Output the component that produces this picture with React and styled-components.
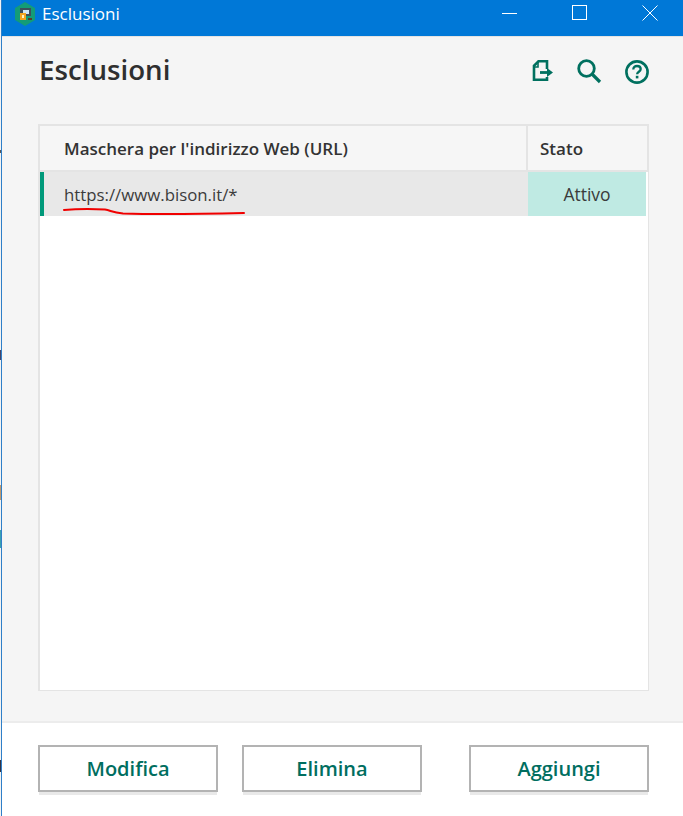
import React from "react";
import styled, { createGlobalStyle } from "styled-components";

const Global = createGlobalStyle`
  html, body { margin: 0; padding: 0; background: #fff; }
  *, *::before, *::after { box-sizing: border-box; }
  body { font-family: "Open Sans", "Noto Sans", "Liberation Sans", sans-serif; overflow: hidden; }
`;

const Desktop = styled.div`
  display: flex;
  width: 683px;
  height: 816px;
  overflow: hidden;
`;
const DesktopSliver = styled.div`
  width: 1px;
  flex: none;
  background: linear-gradient(#f3f3f3 0 150px, #555 150px 153px, #f3f3f3 153px 350px, #446 350px 360px, #f3f3f3 360px 485px, #c09a70 485px 500px, #f3f3f3 500px 530px, #3aa0b0 530px 548px, #f3f3f3 548px 760px, #334 760px 772px, #f3f3f3 772px);
`;
const Window = styled.div`
  flex: 1;
  min-width: 0;
  display: flex;
  flex-direction: column;
  border-left: 1px solid #2f7fc8;
  background: #fff;
`;
const TitleBar = styled.div`
  height: 36px;
  flex: none;
  display: flex;
  align-items: center;
  gap: 4px;
  background: #0078d7;
  color: #fff;
  padding: 0 0 8px 12px;
`;
const TitleText = styled.span`
  font-size: 17px;
  line-height: 24px;
  margin-left: 2px;
  flex: 1;
`;
const WinButton = styled.div`
  width: 66px;
  height: 26px;
  margin-bottom: 2px;
  display: flex;
  align-items: center;
  justify-content: center;
`;
const Body = styled.div`
  flex: 1;
  min-height: 0;
  display: flex;
  flex-direction: column;
  background: #f5f5f5;
  border-top: 1px solid #e3e3e3;
  border-bottom: 2px solid #ececec;
  padding: 0 34px 30px 36px;
`;
const Header = styled.div`
  height: 87px;
  flex: none;
  display: flex;
  align-items: flex-start;
  justify-content: space-between;
`;
const Title = styled.h1`
  margin: 13px 0 0 1px;
  font-size: 27.7px;
  line-height: 38px;
  font-weight: 600;
  color: #2f2f2f;
`;
const Tools = styled.div`
  display: flex;
  gap: 22px;
  margin: 21px -1px 0 0;
`;
const ToolIcon = styled.svg`
  width: 26px;
  height: 26px;
  display: block;
`;
const Table = styled.div`
  flex: 1;
  min-height: 0;
  background: #fff;
  border-style: solid;
  border-color: #e4e4e4;
  border-width: 2px 1px 1px 2px;
  position: relative;
  display: flex;
  flex-direction: column;
`;
const HeadRow = styled.div`
  height: 46px;
  flex: none;
  display: flex;
  background: #f6f6f6;
  border-bottom: 2px solid #e4e4e4;
  border-right: 1px solid #e4e4e4;
`;
const HeadCell = styled.div`
  width: ${(p) => p.$w}px;
  flex: ${(p) => (p.$w ? "none" : 1)};
  display: flex;
  align-items: center;
  padding-left: ${(p) => p.$pad}px;
  font-size: 17px;
  font-weight: 600;
  color: #333;
  border-left: ${(p) => (p.$divider ? "2px solid #e4e4e4" : "none")};
`;
const Row = styled.div`
  height: 44px;
  flex: none;
  display: flex;
  margin-right: 2px;
  background: #e8e8e8;
  border-left: 4px solid #00997a;
`;
const UrlCell = styled.div`
  flex: 1;
  display: flex;
  align-items: center;
  padding-left: 20px;
  font-size: 16.8px;
  color: #3b3b3b;
`;
const StateCell = styled.div`
  width: 118px;
  flex: none;
  display: flex;
  align-items: center;
  justify-content: center;
  background: #bfeae3;
  font-size: 17.5px;
  color: #3b3b3b;
`;
const Scribble = styled.svg`
  position: absolute;
  left: 20px;
  top: 79px;
  width: 190px;
  height: 14px;
  pointer-events: none;
`;
const Footer = styled.div`
  height: 93px;
  flex: none;
  display: flex;
  align-items: flex-start;
  padding: 22px 34px 0 36px;
  background: #fff;
`;
const Button = styled.button`
  width: 180px;
  height: 47px;
  margin-right: ${(p) => p.$gap}px;
  background: #fff;
  border: 2px solid #b3b3b3;
  box-shadow: 0 4px 0 -1px #e9e9e9;
  color: #006e5f;
  font-family: inherit;
  font-size: 20px;
  font-weight: 600;
  padding: 0;
`;

const AppLogo = () => (
  <svg width="22" height="24" viewBox="0 0 22 24">
    <path d="M11 0 21 6v12l-10 6L1 18V6z" fill="#139c77" />
    <rect x="6" y="6" width="11" height="8" fill="#3d4f5c" />
    <rect x="9" y="8" width="6" height="4" fill="#cfe6f5" />
    <rect x="6" y="11" width="6" height="7" fill="#f4a521" />
    <rect x="8" y="13" width="2" height="3" fill="#fff2c4" />
    <rect x="14" y="16" width="4" height="2" fill="#5a3b2a" />
  </svg>
);

const Minimize = () => (
  <svg width="16" height="16" viewBox="0 0 16 16"><path d="M0 8.5h15" stroke="#fff" fill="none" /></svg>
);
const Maximize = () => (
  <svg width="16" height="16" viewBox="0 0 16 16"><rect x="0.5" y="0.5" width="14" height="14" stroke="#fff" fill="none" /></svg>
);
const Close = () => (
  <svg width="16" height="16" viewBox="0 0 16 16"><path d="M0.5 0.5l15 15M15.5 0.5l-15 15" stroke="#fff" fill="none" /></svg>
);

const ExportIcon = () => (
  <ToolIcon viewBox="0 0 26 26">
    <path d="M19 11V3.3H10.5L6 7.8V21.7H19V19" fill="none" stroke="#00705f" strokeWidth="2.6" />
    <path d="M10 4v5H6" fill="none" stroke="#00705f" strokeWidth="1.6" />
    <path d="M12 14.5h8" stroke="#00705f" strokeWidth="2.8" fill="none" />
    <path d="M19 10 25 14.5 19 19z" fill="#00705f" />
  </ToolIcon>
);
const SearchIcon = () => (
  <ToolIcon viewBox="0 0 26 26">
    <circle cx="10.5" cy="10.5" r="7.8" fill="none" stroke="#00705f" strokeWidth="2.8" />
    <path d="M16 16l8 8" stroke="#00705f" strokeWidth="3.2" fill="none" />
  </ToolIcon>
);
const HelpIcon = () => (
  <ToolIcon viewBox="0 0 26 26">
    <circle cx="13" cy="14" r="10.6" fill="none" stroke="#00705f" strokeWidth="2.6" />
    <path d="M9.3 11.4c0-2.2 1.6-3.4 3.7-3.4s3.7 1.2 3.7 3.1c0 2.7-3.6 2.6-3.6 5.2" fill="none" stroke="#00705f" strokeWidth="2.3" />
    <rect x="11.8" y="17.8" width="2.6" height="2.6" fill="#00705f" />
  </ToolIcon>
);

export default function App() {
  return (
    <>
      <Global />
      <Desktop>
        <DesktopSliver />
        <Window>
          <TitleBar>
            <AppLogo />
            <TitleText>Esclusioni</TitleText>
            <WinButton><Minimize /></WinButton>
            <WinButton><Maximize /></WinButton>
            <WinButton><Close /></WinButton>
          </TitleBar>
          <Body>
            <Header>
              <Title>Esclusioni</Title>
              <Tools>
                <ExportIcon />
                <SearchIcon />
                <HelpIcon />
              </Tools>
            </Header>
            <Table>
              <HeadRow>
                <HeadCell $pad={24}>Maschera per l'indirizzo Web (URL)</HeadCell>
                <HeadCell $w={121} $pad={12} $divider>Stato</HeadCell>
              </HeadRow>
              <Row>
                <UrlCell>https://www.bison.it/*</UrlCell>
                <StateCell>Attivo</StateCell>
              </Row>
              <Scribble viewBox="0 0 190 14">
                <path d="M4 5c12 -1 30 -1 41 -0.5c6 1 7 3 18 4c30 1 80 0.5 121 -0.5" fill="none" stroke="#f00000" strokeWidth="2" strokeLinecap="round" />
              </Scribble>
            </Table>
          </Body>
          <Footer>
            <Button $gap={24}>Modifica</Button>
            <Button $gap={47}>Elimina</Button>
            <Button>Aggiungi</Button>
          </Footer>
        </Window>
      </Desktop>
    </>
  );
}
